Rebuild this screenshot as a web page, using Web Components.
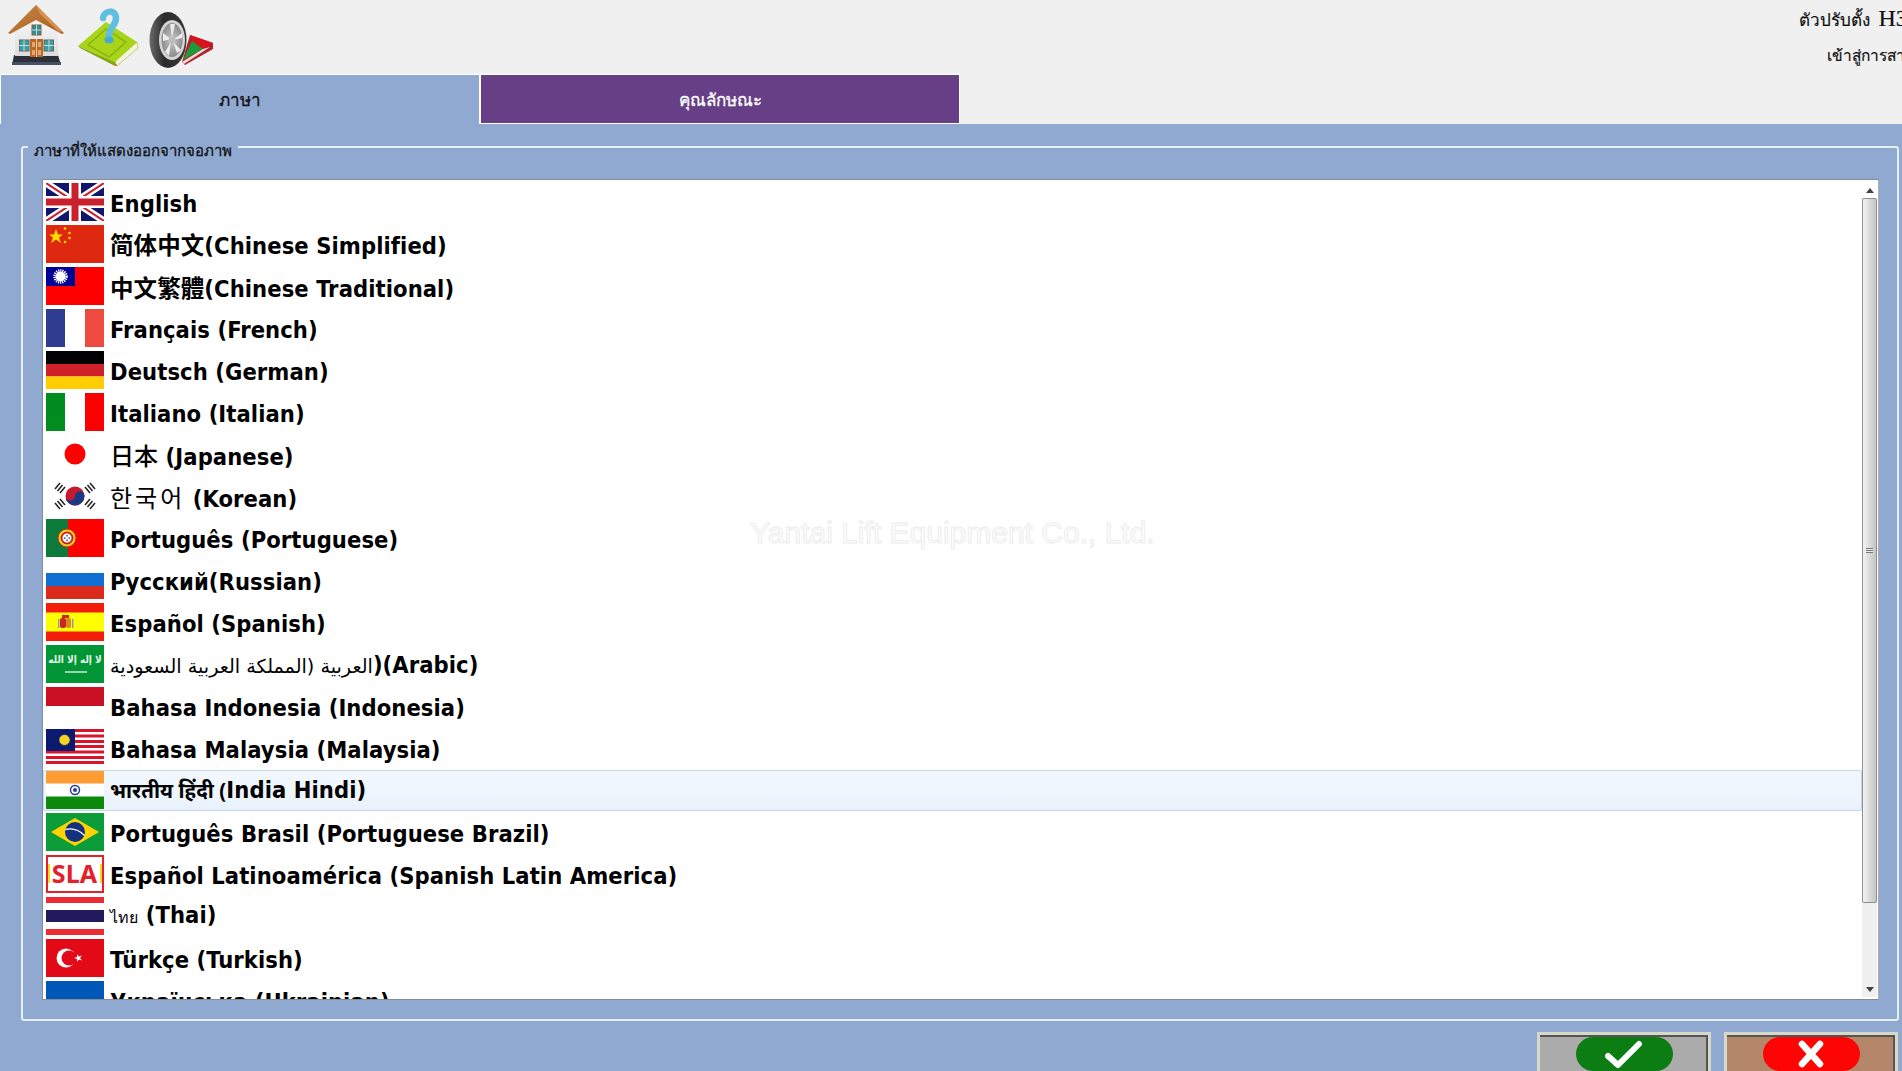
<!DOCTYPE html>
<html lang="th">
<head>
<meta charset="utf-8">
<title>Language</title>
<style>
  html, body { margin: 0; padding: 0; height: 100%; overflow: hidden; background: #90a9d1; }
  body { font-family: "DejaVu Sans", "Noto Sans CJK SC", sans-serif; font-stretch: condensed; }
  .cjk-tc { font-family: "Noto Sans CJK TC", sans-serif; }
  .jp { font-family: "Noto Sans CJK JP", sans-serif; font-weight: 500; font-size: 24px; }
  .kr { font-family: "Noto Sans CJK KR", sans-serif; font-weight: 400; font-size: 24px; letter-spacing: 3px; }
  .ar { font-family: "DejaVu Sans", sans-serif; font-stretch: normal; font-weight: 400; font-size: 19.200px; }
  .hi { font-family: "Noto Sans", "DejaVu Sans", serif; font-weight: 700; font-size: 20.500px; }
  .th { font-family: "Noto Sans", sans-serif; font-weight: 400; font-size: 16px; }
  .h3 { font-size: 24px; }
</style>
</head>
<body>
<app-root>
  <app-header slot="header">
    <tool-icon name="home"></tool-icon>
    <tool-icon name="help"></tool-icon>
    <tool-icon name="tire"></tool-icon>
    <span slot="line1">ตัวปรับตั้ง&nbsp;&nbsp;<span class="h3">H3</span></span>
    <span slot="line2">เข้าสู่การสาธิต</span>
  </app-header>
  <tab-bar slot="tabs">
    <tab-item active>ภาษา</tab-item>
    <tab-item>คุณลักษณะ</tab-item>
  </tab-bar>
  <group-box slot="main" label="ภาษาที่ให้แสดงออกจากจอภาพ">
    <lang-list>
      <lang-row flag="uk">English</lang-row>
      <lang-row flag="cn">简体中文(Chinese Simplified)</lang-row>
      <lang-row flag="tw"><span class="cjk-tc">中文繁體</span>(Chinese Traditional)</lang-row>
      <lang-row flag="fr">Français (French)</lang-row>
      <lang-row flag="de">Deutsch (German)</lang-row>
      <lang-row flag="it">Italiano (Italian)</lang-row>
      <lang-row flag="jp"><span class="jp">日本</span> (Japanese)</lang-row>
      <lang-row flag="kr"><span class="kr">한국어</span> (Korean)</lang-row>
      <lang-row flag="pt">Português (Portuguese)</lang-row>
      <lang-row flag="ru">Русский(Russian)</lang-row>
      <lang-row flag="es">Español (Spanish)</lang-row>
      <lang-row flag="sa"><span class="ar">العربية (المملكة العربية السعودية</span><bdi>)(Arabic)</bdi></lang-row>
      <lang-row flag="id">Bahasa Indonesia (Indonesia)</lang-row>
      <lang-row flag="my">Bahasa Malaysia (Malaysia)</lang-row>
      <lang-row flag="in" selected><span class="hi">भारतीय हिंदी (</span>India Hindi)</lang-row>
      <lang-row flag="br">Português Brasil (Portuguese Brazil)</lang-row>
      <lang-row flag="sla">Español Latinoamérica (Spanish Latin America)</lang-row>
      <lang-row flag="th" raised><span class="th">ไทย</span> (Thai)</lang-row>
      <lang-row flag="tr">Türkçe (Turkish)</lang-row>
      <lang-row flag="ua">Українська (Ukrainian)</lang-row>
    </lang-list>
  </group-box>
  <water-mark slot="main">Yantai Lift Equipment Co., Ltd.</water-mark>
  <action-bar slot="footer">
    <action-button kind="ok"></action-button>
    <action-button kind="cancel"></action-button>
  </action-bar>
</app-root>

<script>
class AppRoot extends HTMLElement {
  constructor() {
    super();
    this.attachShadow({ mode: 'open' });
    this.shadowRoot.innerHTML = `
      <style>
        :host { display: block; width: 1902px; height: 1071px; overflow: hidden; position: relative; background: #90a9d1; }
      </style>
      <slot name="header"></slot>
      <slot name="tabs"></slot>
      <slot name="main"></slot>
      <slot name="footer"></slot>
    `;
  }
}
customElements.define('app-root', AppRoot);

class AppHeader extends HTMLElement {
  constructor() {
    super();
    this.attachShadow({ mode: 'open' });
    this.shadowRoot.innerHTML = `
      <style>
        :host { display: flex; height: 74px; background: #f0f0f0; overflow: hidden; }
        .tools { display: flex; padding-left: 6px; gap: 8px; flex: 1; }
        .info { width: 103px; font: 400 17px "Liberation Serif", serif; font-stretch: normal; color: #111; white-space: nowrap; overflow: hidden; }
        .line { height: 36px; line-height: 36px; }
        .second { padding: 2px 0 0 28px; font-size: 15.500px; }
        ::slotted(span) { -webkit-text-stroke: .2px #111; }
      </style>
      <div class="tools"><slot></slot></div>
      <div class="info">
        <div class="line"><slot name="line1"></slot></div>
        <div class="line second"><slot name="line2"></slot></div>
      </div>
    `;
  }
}
customElements.define('app-header', AppHeader);

const TOOL_ICONS = {
  home: `<svg width="62" height="70" viewBox="6 0 62 70">
    <defs>
      <linearGradient id="r" x1="0" y1="0" x2="1" y2="1"><stop offset="0" stop-color="#c98445"/><stop offset="1" stop-color="#a85f1f"/></linearGradient>
      <linearGradient id="w" x1="0" y1="0" x2="0" y2="1"><stop offset="0" stop-color="#fdfdfd"/><stop offset="1" stop-color="#dcdce0"/></linearGradient>
    </defs>
    <path d="M12 65 L14 55 H58 L61 65 Z" fill="#2c3038"/>
    <path d="M12 62 H61 V65 H12 Z" fill="#475060"/>
    <path d="M15 30 L36 12 L58 30 V56 H15 Z" fill="url(#w)"/>
    <path d="M8 33 L36 5 L64 33 L62 34 L36 20 L10 34 Z" fill="url(#r)"/>
    <path d="M36 5 L64 33 L58 31 L40 14 Z" fill="#d9914f"/>
    <rect x="32" y="25" width="9" height="10" fill="#2f8f98" stroke="#8a5a30"/>
    <rect x="19.500" y="40" width="9.500" height="11" fill="#38a0a8" stroke="#665"/>
    <rect x="44" y="40" width="9.500" height="11" fill="#38a0a8" stroke="#665"/>
    <path d="M24 40 V51 M19 45.500 H29 M49 40 V51 M44 45.500 H54 M36.500 25 V35 M32 30 H41" stroke="#e8e8e8" stroke-width=".8"/>
    <rect x="30" y="39" width="13" height="18" fill="#b9682a"/>
    <path d="M36.500 39 V57" stroke="#f0d0a0"/>
    <path d="M32 42 h3 v5 h-3z M38 42 h3 v5 h-3z M32 50 h3 v5 h-3z M38 50 h3 v5 h-3z" fill="#e2a870"/>
  </svg>`,
  help: `<svg width="64" height="70" viewBox="76 0 64 70">
    <path d="M115 61 L137 42 L138 48 L117 66 Z" fill="#f4f4dc" stroke="#9fb02a" stroke-width=".6"/>
    <path d="M78 46 L106 22 L137 42 L115 62 Z" fill="#a8d41a"/>
    <path d="M78 46 L115 62 L116 66 L113 65 L80 48 Z" fill="#85a80f"/>
    <path d="M88 45 L106 29 L126 42 L109 57 Z" fill="none" stroke="#8fb40f" stroke-width="1.500"/>
    <path d="M114 65 L117 66 L116 64Z" fill="#c43"/>
    <path d="M103 18 C104 10 116 9 116 18 C116 26 109 27 109 36" fill="none" stroke="#5fbfe0" stroke-width="6.500" stroke-linecap="round"/>
    <ellipse cx="109" cy="40" rx="4.500" ry="3.500" fill="#47a9cd"/>
  </svg>`,
  tire: `<svg width="68" height="70" viewBox="146 0 68 70">
    <defs>
      <linearGradient id="t" x1="0" y1="0" x2="1" y2="0"><stop offset="0" stop-color="#6a6a6a"/><stop offset=".4" stop-color="#2a2a2a"/><stop offset="1" stop-color="#3a3a3a"/></linearGradient>
      <radialGradient id="m"><stop offset="0" stop-color="#c8c8c8"/><stop offset="1" stop-color="#8c8c8c"/></radialGradient>
    </defs>
    <path d="M180 62 L188 35 L211 43 L211 49 L183 65 Z" fill="#b3202a"/>
    <path d="M188 35 L211 43 L201 49 L190 41 Z" fill="#d8131c"/>
    <path d="M181 60 L190 41 L201 49 Z" fill="#1f9a3a"/>
    <path d="M180 62 L201 49 L208 47 L182 64 Z" fill="#f3dcdc"/>
    <ellipse cx="166" cy="40" rx="18.500" ry="28" fill="url(#t)"/>
    <ellipse cx="170" cy="40" rx="13" ry="20" fill="#d4d4d4"/>
    <ellipse cx="170" cy="40" rx="10.500" ry="17" fill="url(#m)"/>
    <path d="M170 38 L168 24 L173 24 Z M171 40 L180 33 L180 38 Z M171 42 L179 50 L175 53 Z M169 42 L167 56 L163 52 Z M169 39 L161 33 L161 41 Z" fill="#ececec"/>
    <circle cx="170" cy="40" r="3.500" fill="#bdbdbd"/>
  </svg>`
};

class ToolIcon extends HTMLElement {
  constructor() {
    super();
    this.attachShadow({ mode: 'open' });
  }
  connectedCallback() {
    this.shadowRoot.innerHTML = `
      <style>:host { display: block; } svg { display: block; }</style>
      ${TOOL_ICONS[this.getAttribute('name')] || ''}
    `;
  }
}
customElements.define('tool-icon', ToolIcon);

class TabBar extends HTMLElement {
  constructor() {
    super();
    this.attachShadow({ mode: 'open' });
    this.shadowRoot.innerHTML = `
      <style>
        :host { display: flex; height: 50px; background: #f0f0f0; gap: 2px; box-sizing: border-box; padding: 1px 0 0 1px; }
      </style>
      <slot></slot>
    `;
  }
}
customElements.define('tab-bar', TabBar);

class TabItem extends HTMLElement {
  constructor() {
    super();
    this.attachShadow({ mode: 'open' });
    this.shadowRoot.innerHTML = `
      <style>
        :host { display: flex; align-items: center; justify-content: center; width: 478px; height: 48px; background: #663f86; color: #fff; font: 400 17px "Noto Sans", "Liberation Serif", serif; font-stretch: normal; -webkit-text-stroke: .3px currentColor; box-shadow: 0 0 0 1px #fff; }
        :host([active]) { height: 49px; background: #90a9d1; color: #111; box-shadow: -1px -1px 0 0 #fff, 1px -1px 0 0 #fff; }
      </style>
      <slot></slot>
    `;
  }
}
customElements.define('tab-item', TabItem);

class GroupBox extends HTMLElement {
  constructor() {
    super();
    this.attachShadow({ mode: 'open' });
    this.shadowRoot.innerHTML = `
      <style>
        :host { display: block; box-sizing: border-box; position: relative; height: 875px; margin: 22px 3px 0 21px; padding: 31px 18px 19px 19px; border: 2px solid #e8eef6; border-radius: 3px; }
        .legend { position: absolute; top: -11px; left: 5px; padding: 0 6px; background: #90a9d1; color: #111; font: 400 15px/26px "Noto Sans", "Liberation Serif", serif; font-stretch: normal; -webkit-text-stroke: .3px #111; }
      </style>
      <div class="legend"></div>
      <slot></slot>
    `;
  }
  connectedCallback() {
    this.shadowRoot.querySelector('.legend').textContent = this.getAttribute('label');
  }
}
customElements.define('group-box', GroupBox);

class LangList extends HTMLElement {
  constructor() {
    super();
    this.attachShadow({ mode: 'open' });
    this.shadowRoot.innerHTML = `
      <style>
        :host { display: flex; box-sizing: border-box; height: 100%; background: #fff; border: 1px solid #868c96; border-right-color: #a8adb5; overflow: hidden; }
        .rows { flex: 1; min-width: 0; padding-top: 3px; overflow: hidden; }
      </style>
      <div class="rows"><slot></slot></div>
      <list-scrollbar></list-scrollbar>
    `;
  }
}
customElements.define('lang-list', LangList);

class ListScrollbar extends HTMLElement {
  constructor() {
    super();
    this.attachShadow({ mode: 'open' });
    this.shadowRoot.innerHTML = `
      <style>
        :host { display: flex; flex-direction: column; align-items: center; width: 15px; margin: 2px 1px 2px 0; background: #f0f0f0; flex: none; }
        .btn { height: 16px; display: flex; align-items: center; justify-content: center; background: #fff; width: 100%; }
        .btn.down { background: #f0f0f0; }
        .thumb { height: 705px; width: 100%; box-sizing: border-box; border: 1px solid #8f8f8f; border-radius: 2px; background: linear-gradient(90deg, #f4f4f4, #d8d8d8 55%, #c4c4c4); position: relative; }
        .grip { position: absolute; left: 3px; right: 3px; top: 349px; height: 5px; background: repeating-linear-gradient(#777 0 1px, #eee 1px 2px); }
        .track { flex: 1; }
        .up { border-bottom: 5px solid #444; border-left: 4px solid transparent; border-right: 4px solid transparent; }
        .dn { border-top: 5px solid #444; border-left: 4px solid transparent; border-right: 4px solid transparent; }
      </style>
      <div class="btn"><span class="up"></span></div>
      <div class="thumb"><div class="grip"></div></div>
      <div class="track"></div>
      <div class="btn down"><span class="dn"></span></div>
    `;
  }
}
customElements.define('list-scrollbar', ListScrollbar);

const LANG_FLAGS = {
  uk: `<rect width="58" height="38" fill="#10166b"/>
    <path d="M0 0 L58 38 M58 0 L0 38" stroke="#fff" stroke-width="7"/>
    <path d="M0 0 L58 38 M58 0 L0 38" stroke="#c9202c" stroke-width="2"/>
    <path d="M29 0 V38 M0 19 H58" stroke="#fff" stroke-width="12"/>
    <path d="M29 0 V38 M0 19 H58" stroke="#c9202c" stroke-width="7"/>`,
  cn: `<rect width="58" height="38" fill="#de2910"/>
    <polygon points="10,4 12,9.500 17,9.500 13,12.500 15,18 10,14.500 5,18 7,12.500 3,9.500 8,9.500" fill="#ffde00"/>
    <circle cx="19" cy="3.500" r="1.300" fill="#ffde00"/><circle cx="23.500" cy="8" r="1.300" fill="#ffde00"/><circle cx="23.500" cy="13" r="1.300" fill="#ffde00"/><circle cx="19" cy="17" r="1.300" fill="#ffde00"/>`,
  tw: `<rect width="58" height="38" fill="#fe0000"/><rect width="29" height="19" fill="#000095"/>
    <circle cx="14.500" cy="9.500" r="5" fill="#fff"/>
    <circle cx="14.500" cy="9.500" r="6" fill="none" stroke="#fff" stroke-width="2.500" stroke-dasharray="1.200 .9"/>`,
  fr: `<rect width="58" height="38" fill="#fff"/><rect width="19" height="38" fill="#2e3d8f"/><rect x="39" width="19" height="38" fill="#ee4a3f"/>`,
  de: `<rect width="58" height="13" fill="#000"/><rect y="13" width="58" height="12.500" fill="#d0202a"/><rect y="25.500" width="58" height="12.500" fill="#ffce00"/>`,
  it: `<rect width="58" height="38" fill="#fff"/><rect width="19" height="38" fill="#008c1e"/><rect x="39" width="19" height="38" fill="#fb0000"/>`,
  jp: `<rect width="58" height="38" fill="#fff"/><circle cx="29" cy="19" r="10.500" fill="#fe0000"/>`,
  kr: `<rect width="58" height="38" fill="#fff"/>
    <circle cx="29" cy="19" r="9.500" fill="#c8192e"/>
    <path d="M19.500 19 A9.500 9.500 0 0 0 38.500 19 A4.750 4.750 0 0 0 29 19 A4.750 4.750 0 0 1 19.500 19 Z" fill="#1b3a85"/>
    <g stroke="#222" stroke-width="1.500"><path d="M9 12 L14 6 M11.500 14 L16.500 8 M14 16 L19 10"/><path d="M39 10 L44 16 M41.500 8 L46.500 14 M44 6 L49 12"/><path d="M9 26 L14 32 M11.500 24 L16.500 30 M14 22 L19 28"/><path d="M39 28 L44 22 M41.500 30 L46.500 24 M44 32 L49 26"/></g>`,
  pt: `<rect width="58" height="38" fill="#fe0000"/><rect width="22" height="38" fill="#0b7a3a"/>
    <circle cx="21" cy="19" r="9" fill="#f7d21f" stroke="#c8281e"/><circle cx="21" cy="19" r="5.500" fill="#fff" stroke="#c8281e" stroke-width="2"/>
    <g fill="#2d4fa0"><rect x="20.300" y="16" width="1.500" height="1.500"/><rect x="18" y="18.300" width="1.500" height="1.500"/><rect x="22.500" y="18.300" width="1.500" height="1.500"/><rect x="20.300" y="20.500" width="1.500" height="1.500"/></g>`,
  ru: `<rect width="58" height="38" fill="#fff"/><rect y="12" width="58" height="13" fill="#0f6ed2"/><rect y="25" width="58" height="13" fill="#d92a1c"/>`,
  es: `<rect width="58" height="38" fill="#f21e0a"/><rect y="9.500" width="58" height="19" fill="#ffff00"/>
    <rect x="14" y="15" width="6" height="10" rx="2" fill="#c8281e"/><rect x="20" y="15" width="5" height="10" rx="2" fill="#d9892a"/><rect x="12" y="16" width="1.500" height="9" fill="#999"/><rect x="26" y="16" width="1.500" height="9" fill="#999"/><rect x="16" y="12" width="7" height="3" fill="#c8281e"/>`,
  sa: `<rect width="58" height="38" fill="#009636"/>
    <text x="29" y="18" text-anchor="middle" font-family="DejaVu Sans" font-size="10" fill="#e6f5e6">لا إله إلا الله</text>
    <path d="M19 27 H41" stroke="#eef8ee" stroke-width="1.300"/>`,
  id: `<rect width="58" height="38" fill="#fff"/><rect width="58" height="19" fill="#ca1024"/>`,
  my: `<rect width="58" height="38" fill="#fff"/>
    <g fill="#d8152a"><rect width="58" height="3"/><rect y="5.500" width="58" height="3"/><rect y="11" width="58" height="3"/><rect y="16" width="58" height="3"/><rect y="21.500" width="58" height="3"/><rect y="27" width="58" height="3"/><rect y="32" width="58" height="3"/></g>
    <rect width="29" height="22" fill="#0b1a6e"/>
    <path d="M14 3 A8 8 0 1 0 14 19 A6.500 6.500 0 1 1 14 3 Z" fill="#f4d51e"/>
    <circle cx="18.500" cy="11" r="5" fill="#f4d51e" stroke="#f4d51e" stroke-dasharray="1 1"/>`,
  in: `<rect width="58" height="38" fill="#fff"/><rect width="58" height="12.500" fill="#ff9b31"/><rect y="25.500" width="58" height="12.500" fill="#0b8a0b"/>
    <circle cx="29" cy="19" r="4.500" fill="#fff" stroke="#2a3a90" stroke-width="1.500"/><circle cx="29" cy="19" r="2" fill="#2a3a90"/>`,
  br: `<rect width="58" height="38" fill="#0c9c3a"/><polygon points="29,5 53,19 29,33 5,19" fill="#fed300"/>
    <circle cx="29" cy="19" r="10" fill="#13317f"/><path d="M19.500 16.500 Q30 14 38.500 22.500" stroke="#fff" stroke-width="1.300" fill="none"/>`,
  sla: `<rect width="58" height="38" fill="#e2212b"/><rect x="2" y="2" width="54" height="34" fill="#fff"/>
    <rect x="2" y="9" width="2" height="19" fill="#f6de1a"/><rect x="54" y="9" width="2" height="19" fill="#f6de1a"/>
    <text x="28.500" y="28" text-anchor="middle" font-family="Noto Sans" font-weight="700" font-size="25" fill="#e2212b">SLA</text>`,
  th: `<rect width="58" height="38" fill="#fff"/><rect width="58" height="6" fill="#ee2a33"/><rect y="32" width="58" height="6" fill="#ee2a33"/><rect y="13" width="58" height="12" fill="#221a5c"/>`,
  tr: `<rect width="58" height="38" fill="#e30a17"/><circle cx="20" cy="19" r="9.500" fill="#fff"/><circle cx="23" cy="19" r="7.500" fill="#e30a17"/>
    <polygon points="28,19 36,16.500 31,22.800 31,15.200 36,21.500" fill="#fff"/>`,
  ua: `<rect width="58" height="19" fill="#0057b8"/><rect y="19" width="58" height="19" fill="#ffd700"/>`
};

class LangFlag extends HTMLElement {
  static get observedAttributes() { return ['code']; }
  constructor() {
    super();
    this.attachShadow({ mode: 'open' });
  }
  attributeChangedCallback() {
    this.shadowRoot.innerHTML = `
      <style>:host { display: block; width: 58px; height: 38px; flex: none; } svg { display: block; }</style>
      <svg width="58" height="38" viewBox="0 0 58 38">${LANG_FLAGS[this.getAttribute('code')] || ''}</svg>
    `;
  }
}
customElements.define('lang-flag', LangFlag);

class LangRow extends HTMLElement {
  constructor() {
    super();
    this.attachShadow({ mode: 'open' });
    this.shadowRoot.innerHTML = `
      <style>
        :host { display: flex; align-items: center; box-sizing: border-box; height: 42px; padding: 0 0 4px 3px; gap: 6px; font-size: 23.500px; letter-spacing: .08px; font-weight: 700; color: #000; white-space: nowrap; position: relative; }
        :host([selected]) { background: linear-gradient(#f3f8fe, #e9f2fc); box-shadow: inset 0 0 0 1px #c4d8ee; height: 41px; margin: -1px 0 2px 0; padding: 1px 0 3px 3px; border-radius: 2px; }
        .label { line-height: 38px; margin-top: 3px; }
        :host([selected]) .label { margin-top: 0; }
        :host([raised]) .label { margin-top: 0; }
      </style>
      <lang-flag></lang-flag>
      <span class="label"><slot></slot></span>
    `;
  }
  connectedCallback() {
    this.shadowRoot.querySelector('lang-flag').setAttribute('code', this.getAttribute('flag'));
  }
}
customElements.define('lang-row', LangRow);

class WaterMark extends HTMLElement {
  constructor() {
    super();
    this.attachShadow({ mode: 'open' });
    this.shadowRoot.innerHTML = `
      <style>
        :host { position: absolute; left: 750px; top: 516px; font: 400 30px/34px "Liberation Sans", sans-serif; font-stretch: normal; color: transparent; -webkit-text-stroke: 1px #ececec; white-space: nowrap; pointer-events: none; }
      </style>
      <slot></slot>
    `;
  }
}
customElements.define('water-mark', WaterMark);

class ActionBar extends HTMLElement {
  constructor() {
    super();
    this.attachShadow({ mode: 'open' });
    this.shadowRoot.innerHTML = `
      <style>
        :host { display: flex; justify-content: flex-end; gap: 13px; margin-top: 11px; padding-right: 4px; }
      </style>
      <slot></slot>
    `;
  }
}
customElements.define('action-bar', ActionBar);

class ActionButton extends HTMLElement {
  constructor() {
    super();
    this.attachShadow({ mode: 'open' });
  }
  connectedCallback() {
    const ok = this.getAttribute('kind') === 'ok';
    this.shadowRoot.innerHTML = `
      <style>
        :host { display: flex; justify-content: center; box-sizing: border-box; width: 174px; height: 52px; padding-top: 2px; border: 3px solid #d8d8c8; border-bottom: 0; background: ${ok ? '#ababab' : '#b5876a'}; box-shadow: inset -2px 2px 0 #555; }
        .pill { display: flex; align-items: center; justify-content: center; width: 97px; height: 34px; border-radius: 17px; background: ${ok ? '#0c7d13' : '#fe0505'}; }
      </style>
      <div class="pill">
        <svg width="38" height="30" viewBox="0 0 38 30">
          ${ok
            ? '<path d="M3 17 L13 26 L34 5" fill="none" stroke="#fff" stroke-width="6" stroke-linecap="round" stroke-linejoin="round"/>'
            : '<path d="M10 5 L28 25 M28 5 L10 25" fill="none" stroke="#fff" stroke-width="6.500" stroke-linecap="round"/>'}
        </svg>
      </div>
    `;
  }
}
customElements.define('action-button', ActionButton);
</script>
</body>
</html>
